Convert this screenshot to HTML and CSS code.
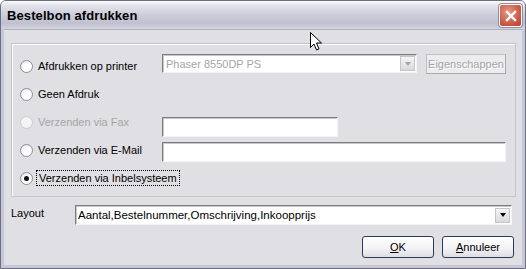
FILE: index.html
```html
<!DOCTYPE html>
<html lang="nl">
<head>
  <meta charset="UTF-8" />
  <title>Bestelbon afdrukken</title>
  <link rel="stylesheet" href="styles.css">
</head>
<body>
  <div class="window">
    <div class="titlebar">
      <span class="title">Bestelbon afdrukken</span>
      <span class="close">
        <svg width="12" height="12" viewBox="0 0 12 12"><path d="M2 2 L10 10 M10 2 L2 10" stroke="#fff" stroke-width="2.4" stroke-linecap="square"/></svg>
      </span>
    </div>

    <div class="client">
      <div class="group">
        <div class="row row-printer">
          <label class="opt"><span class="radio"></span>Afdrukken op printer</label>
          <div class="combo disabled printer">
            <span class="combo-text">Phaser 8550DP PS</span>
            <span class="combo-btn"><span class="arrow"></span></span>
          </div>
          <button class="btn-flat" disabled>Eigenschappen</button>
        </div>
        <div class="row">
          <label class="opt"><span class="radio"></span>Geen Afdruk</label>
        </div>
        <div class="row row-fax">
          <label class="opt off"><span class="radio"></span>Verzenden via Fax</label>
          <div class="field fax"></div>
        </div>
        <div class="row row-email">
          <label class="opt"><span class="radio"></span>Verzenden via E-Mail</label>
          <div class="field email"></div>
        </div>
        <div class="row">
          <label class="opt"><span class="radio checked"></span><span class="focus">Verzenden via Inbelsysteem</span></label>
        </div>
      </div>

      <div class="layout-row">
        <span class="layout-label">Layout</span>
        <div class="combo layout">
          <span class="combo-text">Aantal,Bestelnummer,Omschrijving,Inkoopprijs</span>
          <span class="combo-btn"><span class="arrow"></span></span>
        </div>
      </div>

      <div class="buttons">
        <button class="btn"><u>O</u>K</button>
        <button class="btn"><u>A</u>nnuleer</button>
      </div>
    </div>

    <svg class="cursor" width="13" height="20" viewBox="0 0 13 20">
      <path d="M0.5 0.5 L0.5 15.5 L4 12 L6.5 18 L9 17 L6.5 11 L11.5 11 Z" fill="#fff" stroke="#000" stroke-width="1"/>
    </svg>
  </div>
</body>
</html>
```

FILE: styles.css
```css
body { margin: 0; font-family: "Liberation Sans", Arial, sans-serif; font-size: 11px; color: #000; }

.window {
  position: relative;
  width: 526px; height: 269px;
  box-sizing: border-box;
  background: #c8c7d4;
  border: 1px solid #6e6d86;
  border-radius: 6px 6px 0 0;
  display: flex; flex-direction: column;
  overflow: hidden;
}

.titlebar {
  height: 28px;
  display: flex; align-items: center; justify-content: space-between;
  padding: 0 3px 0 6px;
  background: linear-gradient(#fdfdfd 0%, #e4e4ec 15%, #c9c9d8 55%, #c0c0d0 80%, #d4d4de 100%);
  flex: none;
}
.title { font-size: 13px; font-weight: bold; color: #000; letter-spacing: 0.1px; }
.close {
  width: 21px; height: 21px;
  display: flex; align-items: center; justify-content: center;
  border: 1px solid #fff;
  border-radius: 3px;
  background: radial-gradient(circle at 40% 35%, #e79a86, #c9523f 70%, #b84434);
  box-shadow: 0 0 0 1px #9a8e94;
  margin-top: 1px;
}

.client {
  flex: 1;
  margin: 0 3px 3px 3px;
  background: #e0dfe3;
  border-top: 1px solid #b0afc0;
  padding: 13px 6px 0 7px;
  display: flex; flex-direction: column;
}

.group {
  height: 154px;
  box-sizing: border-box;
  border: 1px solid #c5c4cc;
  box-shadow: inset 1px 1px 0 #fff;
  padding: 8px 8px 0 8px;
}

.row { display: flex; align-items: center; height: 28px; }
.row-printer .combo, .row-printer .btn-flat { align-self: flex-start; margin-top: 2px; }
.row-fax .field { align-self: flex-start; margin-top: 9px; }
.row-email .field { align-self: flex-start; margin-top: 6px; }

.opt { display: flex; align-items: center; width: 142px; flex: none; white-space: nowrap; }
.opt.off { color: #a5a5a5; }
.radio {
  width: 11px; height: 11px;
  border-radius: 50%;
  border: 1px solid #8e8c9c;
  background: radial-gradient(circle at 65% 65%, #fff 40%, #dcdbe2);
  margin-right: 5px;
  position: relative;
  flex: none;
}
.opt.off .radio { border-color: #c9c8d0; background: #f4f4f4; }
.radio.checked::after {
  content: ""; position: absolute; left: 3px; top: 3px;
  width: 5px; height: 5px; border-radius: 50%; background: #111;
}
.focus { outline: 1px dotted #000; outline-offset: 1px; padding: 0 1px; }

.field {
  height: 20px; box-sizing: border-box;
  background: #fff;
  border: 1px solid #f4f4f4;
  border-top-color: #7c7c7c; border-left-color: #7c7c7c;
  box-shadow: inset 1px 1px 0 #c8c8c8;
}
.fax { width: 176px; }
.email { width: 344px; }

.combo {
  display: flex; align-items: center;
  height: 19px; box-sizing: border-box;
  background: #fff;
  border: 1px solid #f4f4f4;
  border-top-color: #7c7c7c; border-left-color: #7c7c7c;
  box-shadow: inset 1px 1px 0 #c8c8c8;
  padding: 0 1px 0 3px;
}
.combo-text { flex: 1; white-space: nowrap; overflow: hidden; }
.combo.disabled .combo-text { color: #a5a5a5; }
.printer { width: 255px; }
.combo-btn {
  width: 15px; height: 15px;
  background: linear-gradient(#f6f6f8, #d8d8de);
  border: 1px solid #c4c4cc;
  display: flex; align-items: center; justify-content: center;
  box-sizing: border-box;
}
.arrow { width: 0; height: 0; border-left: 3.5px solid transparent; border-right: 3.5px solid transparent; border-top: 4px solid #000; }
.combo.disabled .arrow { border-top-color: #a5a5a5; }

.btn-flat {
  margin-left: 9px;
  width: 80px; height: 20px;
  font: inherit;
  color: #a3a3a3;
  text-shadow: 1px 1px 0 #fff;
  background: #ececee;
  border: 1px solid #c0c0c8;
  border-right-color: #a8a8b0; border-bottom-color: #a8a8b0;
  padding: 0;
}

.layout-row { display: flex; align-items: center; margin-top: 8px; height: 20px; }
.layout-label { width: 64px; flex: none; margin-top: -4px; }
.layout { width: 437px; height: 20px; padding-left: 2px; font-size: 11.5px; }

.buttons { display: flex; justify-content: flex-end; gap: 8px; margin-top: 11px; padding-right: 2px; }
.btn {
  width: 72px; height: 22px;
  font: inherit;
  border: 1px solid #2d3a5c;
  border-radius: 3px;
  background: linear-gradient(#ffffff, #f2f2f4 60%, #dcdce4);
  padding: 0;
}
.btn u { text-decoration: underline; }

.cursor { position: absolute; left: 309px; top: 31px; }
```
